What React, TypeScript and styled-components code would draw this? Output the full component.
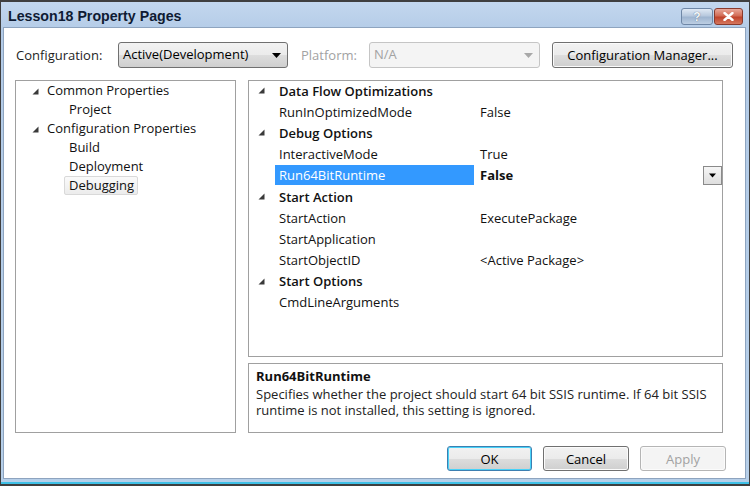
import React from 'react';
import styled, {createGlobalStyle} from 'styled-components';

const GlobalStyle = createGlobalStyle`
  html, body {
    margin: 0;
    padding: 0;
    background: #3f3f3f;
  }
  body {
    font-family: "Open Sans", "Noto Sans", sans-serif;
    font-size: 13px;
    color: #1e1e1e;
  }
`

type TreeNode = {
    label: string
    group?: boolean
    selected?: boolean
}

type GridRow = {
    name: string
    value?: string
    group?: boolean
    selected?: boolean
}

const tree: TreeNode[] = [
    {label: 'Common Properties', group: true},
    {label: 'Project'},
    {label: 'Configuration Properties', group: true},
    {label: 'Build'},
    {label: 'Deployment'},
    {label: 'Debugging', selected: true},
]

const rows: GridRow[] = [
    {name: 'Data Flow Optimizations', group: true},
    {name: 'RunInOptimizedMode', value: 'False'},
    {name: 'Debug Options', group: true},
    {name: 'InteractiveMode', value: 'True'},
    {name: 'Run64BitRuntime', value: 'False', selected: true},
    {name: 'Start Action', group: true},
    {name: 'StartAction', value: 'ExecutePackage'},
    {name: 'StartApplication'},
    {name: 'StartObjectID', value: '<Active Package>'},
    {name: 'Start Options', group: true},
    {name: 'CmdLineArguments'},
]

const Expander = () => (
    <svg width="7" height="7" viewBox="0 0 7 7">
        <polygon points="6.5,0.5 6.5,6.5 0.5,6.5" fill="#3a3a3a"/>
    </svg>
)

const DownArrow = ({color = '#000'}: {color?: string}) => (
    <svg width="9" height="5" viewBox="0 0 9 5">
        <polygon points="0,0 9,0 4.5,5" fill={color}/>
    </svg>
)

export default function App() {
    return (
        <>
            <GlobalStyle/>
            <Frame>
                <TitleBar>
                    <Title>Lesson18 Property Pages</Title>
                    <Caption>
                        <CapButton>?</CapButton>
                        <CapButton close>
                            <svg width="11" height="9" viewBox="0 0 11 9">
                                <path d="M1.5 1 L9.5 8 M9.5 1 L1.5 8" stroke="#fff" strokeWidth="2.4"
                                      strokeLinecap="round"/>
                            </svg>
                        </CapButton>
                    </Caption>
                </TitleBar>
                <Client>
                    <TopRow>
                        <Label width={102}>Configuration:</Label>
                        <Select width={170}>
                            <span>Active(Development)</span>
                            <DownArrow/>
                        </Select>
                        <Label width={68} disabled>Platform:</Label>
                        <Select width={171} disabled>
                            <span>N/A</span>
                            <DownArrow color="#a8a8a8"/>
                        </Select>
                        <Button width={181}>Configuration Manager...</Button>
                    </TopRow>
                    <Body>
                        <TreePanel>
                            {tree.map(n => (
                                <TreeItem key={n.label} group={n.group}>
                                    {n.group && <Expander/>}
                                    <TreeText selected={n.selected}>{n.label}</TreeText>
                                </TreeItem>
                            ))}
                        </TreePanel>
                        <RightColumn>
                            <GridPanel>
                                {rows.map(r => (
                                    <Row key={r.name}>
                                        <Toggle>{r.group && <Expander/>}</Toggle>
                                        <NameCell group={r.group} selected={r.selected}>{r.name}</NameCell>
                                        <ValueCell bold={r.selected}>
                                            {r.value}
                                            {r.selected && <DropButton><DownArrow/></DropButton>}
                                        </ValueCell>
                                    </Row>
                                ))}
                            </GridPanel>
                            <DescPanel>
                                <DescTitle>Run64BitRuntime</DescTitle>
                                <DescText>Specifies whether the project should start 64 bit SSIS runtime. If 64 bit SSIS
                                    runtime is not installed, this setting is ignored.</DescText>
                            </DescPanel>
                        </RightColumn>
                    </Body>
                    <Footer>
                        <Button width={85} primary>OK</Button>
                        <Button width={86}>Cancel</Button>
                        <Button width={86} disabled>Apply</Button>
                    </Footer>
                </Client>
            </Frame>
        </>
    );
}

const Frame = styled.div`
  box-sizing: border-box;
  width: 748px;
  height: 482px;
  margin: 2px 0 0 1px;
  padding: 0 3px 3px 2px;
  display: flex;
  flex-direction: column;
  background: linear-gradient(#c3d7ee, #b3cbe7 30px, #b6cfe9);
  border-bottom: 2px solid #3ec0e6;
`
const TitleBar = styled.div`
  height: 25px;
  display: flex;
  align-items: center;
  justify-content: space-between;
  padding: 0 3px 0 5px;
`
const Title = styled.div`
  font-family: "Liberation Sans", Arial, sans-serif;
  font-weight: bold;
  font-size: 14.2px;
  color: #0f1b33;
  margin-top: 2px;
`
const Caption = styled.div`
  display: flex;
  gap: 1px;
  align-self: flex-start;
  margin-top: 6px;
`
const CapButton = styled.div<{ close?: boolean }>`
  width: ${p => p.close ? 29 : 32}px;
  height: 17px;
  box-sizing: border-box;
  border: 1px solid ${p => p.close ? '#8a3a2c' : '#6f87a6'};
  border-radius: 3px;
  display: flex;
  align-items: center;
  justify-content: center;
  font-family: "Liberation Sans", Arial, sans-serif;
  font-weight: bold;
  font-size: 12px;
  color: #f4f7fb;
  text-shadow: 0 0 1px #44546a;
  background: ${p => p.close
          ? 'linear-gradient(#e9a89a, #d26c56 45%, #c0432b 55%, #d5775e)'
          : 'linear-gradient(#e0e9f4, #b8c9de 45%, #9fb5d0 55%, #bccee3)'};
`
const Client = styled.div`
  flex: 1;
  background: #fff;
  border: 1px solid #8ea4bf;
  display: flex;
  flex-direction: column;
  padding: 14px 12px 0 11px;
`
const TopRow = styled.div`
  display: flex;
  align-items: center;
  height: 26px;
`
const Label = styled.span<{ width: number, disabled?: boolean }>`
  box-sizing: border-box;
  width: ${p => p.width}px;
  flex-shrink: 0;
  color: ${p => p.disabled ? '#a2a2a2' : '#1e1e1e'};
  margin-left: ${p => p.disabled ? 13 : 1}px;
`
const Select = styled.div<{ width: number, disabled?: boolean }>`
  box-sizing: border-box;
  width: ${p => p.width}px;
  height: 26px;
  display: flex;
  align-items: center;
  justify-content: space-between;
  padding: 0 6px 0 4px;
  border: 1px solid ${p => p.disabled ? '#c5c5c5' : '#707070'};
  border-radius: 3px;
  color: ${p => p.disabled ? '#a2a2a2' : '#000'};
  background: ${p => p.disabled ? '#f4f4f4' : 'linear-gradient(#f2f2f2, #ebebeb 50%, #dddddd 51%, #cfcfcf)'};
  span {
    margin-top: -2px;
  }
`
const Button = styled.div<{ width: number, primary?: boolean, disabled?: boolean }>`
  box-sizing: border-box;
  width: ${p => p.width}px;
  height: 26px;
  margin-left: auto;
  display: flex;
  align-items: center;
  justify-content: center;
  border-radius: 3px;
  color: ${p => p.disabled ? '#a2a2a2' : '#000'};
  border: 1px solid ${p => p.primary ? '#3c7fb1' : p.disabled ? '#b5b5b5' : '#707070'};
  box-shadow: ${p => p.primary ? 'inset 0 0 0 1px #48d2f8' : 'inset 0 0 0 1px #fbfbfb'};
  background: ${p => p.disabled ? '#f4f4f4' : 'linear-gradient(#f2f2f2, #ebebeb 50%, #dddddd 51%, #cfcfcf)'};
`
const Body = styled.div`
  display: flex;
  gap: 12px;
  margin-top: 12px;
  height: 353px;
`
const TreePanel = styled.div`
  box-sizing: border-box;
  width: 221px;
  border: 1px solid #a0a0a0;
  padding: 0 0 0 16px;
`
const TreeItem = styled.div<{ group?: boolean }>`
  height: 19px;
  display: flex;
  align-items: center;
  gap: 8px;
  padding-left: ${p => p.group ? 0 : 37}px;
  svg {
    margin-top: 1px;
  }
`
const TreeText = styled.span<{ selected?: boolean }>`
  color: #111;
  padding: 0 3px 0 4px;
  margin-left: -5px;
  line-height: 17px;
  border: 1px solid ${p => p.selected ? '#d9d9d9' : 'transparent'};
  border-radius: 2px;
  background: ${p => p.selected ? 'linear-gradient(#fafafa, #ececec)' : 'none'};
`
const RightColumn = styled.div`
  width: 475px;
  display: flex;
  flex-direction: column;
  gap: 6px;
`
const GridPanel = styled.div`
  box-sizing: border-box;
  height: 279px;
  border: 1px solid #a0a0a0;
`
const Row = styled.div`
  display: flex;
  align-items: center;
  height: 21.2px;
  &:first-child {
    margin-top: -1px;
  }
`
const Toggle = styled.div`
  width: 26px;
  display: flex;
  justify-content: flex-end;
  svg {
    margin-right: 10px;
  }
`
const NameCell = styled.div<{ group?: boolean, selected?: boolean }>`
  width: 199px;
  height: 20px;
  box-sizing: border-box;
  display: flex;
  align-items: center;
  padding-left: 4px;
  font-weight: ${p => p.group ? 600 : 400};
  color: ${p => p.selected ? '#fff' : '#111'};
  background: ${p => p.selected ? '#3399ff' : 'none'};
`
const ValueCell = styled.div<{ bold?: boolean }>`
  flex: 1;
  display: flex;
  align-items: center;
  justify-content: space-between;
  padding-left: 6px;
  font-weight: ${p => p.bold ? 700 : 400};
  color: #111;
`
const DropButton = styled.div`
  box-sizing: border-box;
  width: 19px;
  height: 19px;
  border: 1px solid #8a8a8a;
  display: flex;
  align-items: center;
  justify-content: center;
  background: linear-gradient(#f6f6f6, #dedede);
  svg {
    width: 7px;
  }
`
const DescPanel = styled.div`
  box-sizing: border-box;
  height: 70px;
  border: 1px solid #a0a0a0;
  padding: 3px 7px;
`
const DescTitle = styled.div`
  font-weight: 700;
  line-height: 19px;
  color: #111;
`
const DescText = styled.div`
  line-height: 16px;
  color: #222;
  padding-right: 6px;
`
const Footer = styled.div`
  display: flex;
  justify-content: flex-end;
  gap: 11px;
  margin-top: 13px;
  padding-right: 7px;
  ${Button} {
    margin-left: 0;
    height: 25px;
  }
`
